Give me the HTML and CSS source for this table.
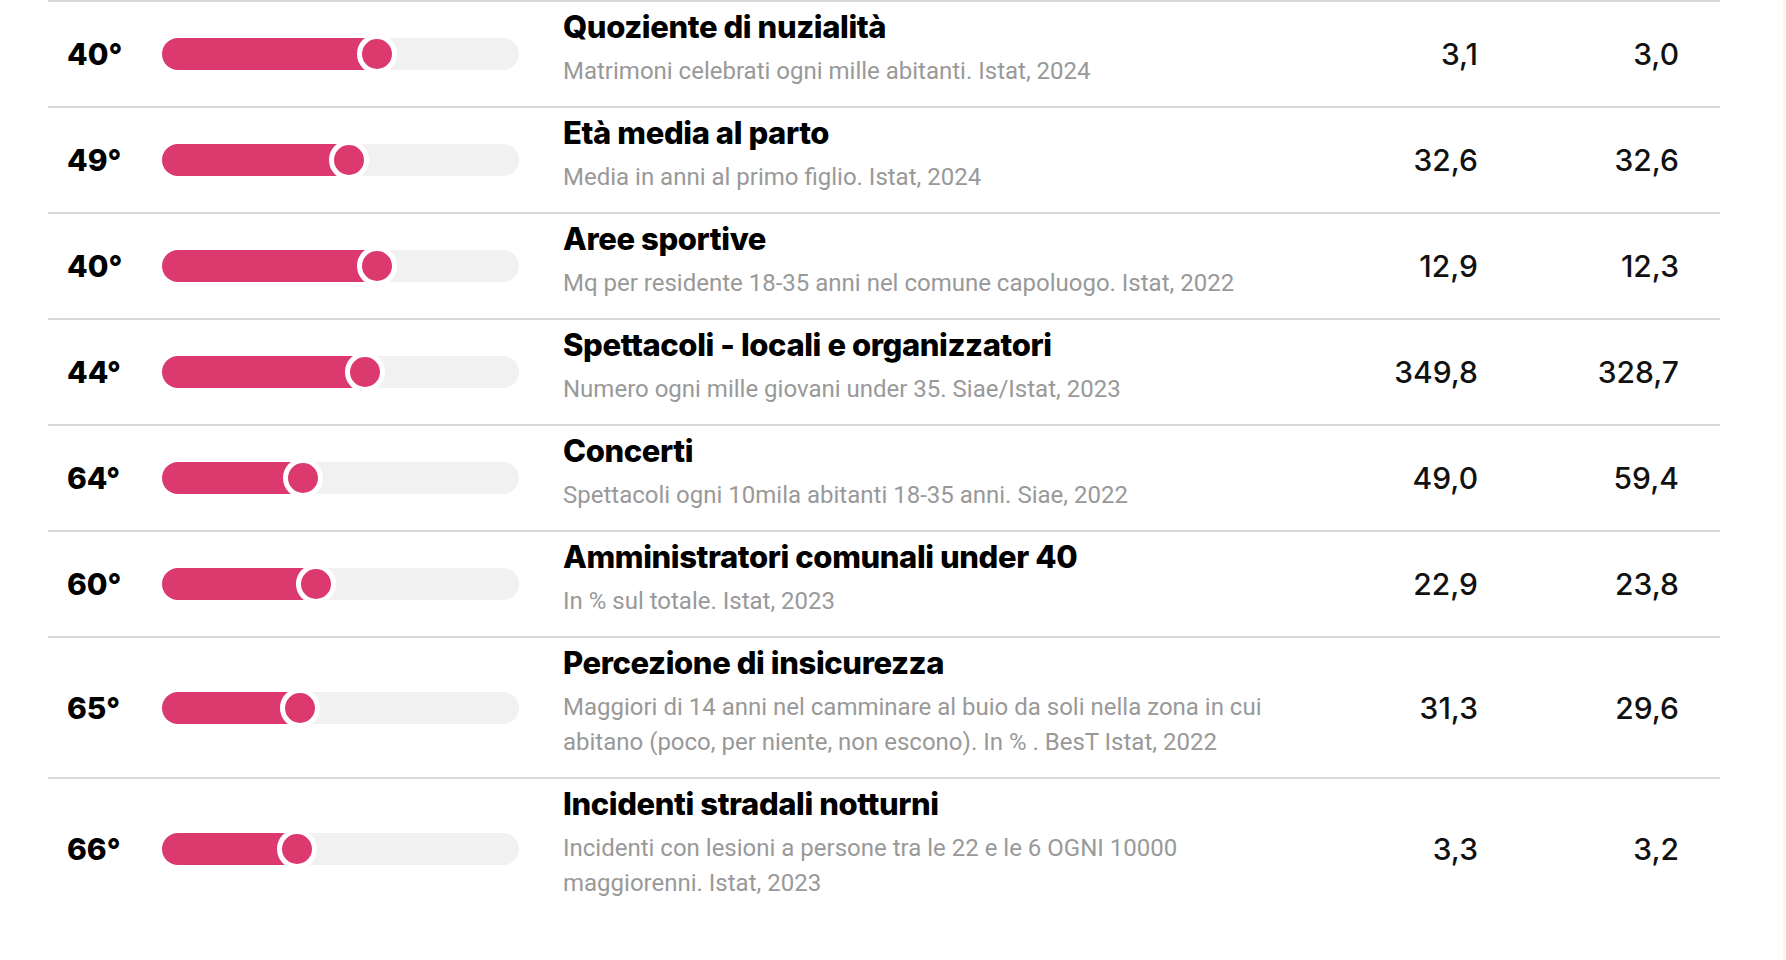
FILE: index.html
```html
<!DOCTYPE html>
<html lang="it">
<head>
<meta charset="utf-8">
<title>Classifica indicatori</title>
<link rel="stylesheet" href="styles.css">
</head>
<body>
<div class="page">
  <main class="content">
    <div class="table">
      <div class="row">
        <div class="rank">40°</div>
        <div class="track"><div class="fill" style="width:60.2%"></div><div class="knob" style="left:60.2%"></div></div>
        <div class="info"><div class="title">Quoziente di nuzialità</div><div class="desc">Matrimoni celebrati ogni mille abitanti. Istat, 2024</div></div>
        <div class="num">3,1</div>
        <div class="num">3,0</div>
      </div>
      <div class="row">
        <div class="rank">49°</div>
        <div class="track"><div class="fill" style="width:52.5%"></div><div class="knob" style="left:52.5%"></div></div>
        <div class="info"><div class="title">Età media al parto</div><div class="desc">Media in anni al primo figlio. Istat, 2024</div></div>
        <div class="num">32,6</div>
        <div class="num">32,6</div>
      </div>
      <div class="row">
        <div class="rank">40°</div>
        <div class="track"><div class="fill" style="width:60.2%"></div><div class="knob" style="left:60.2%"></div></div>
        <div class="info"><div class="title">Aree sportive</div><div class="desc">Mq per residente 18-35 anni nel comune capoluogo. Istat, 2022</div></div>
        <div class="num">12,9</div>
        <div class="num">12,3</div>
      </div>
      <div class="row">
        <div class="rank">44°</div>
        <div class="track"><div class="fill" style="width:56.8%"></div><div class="knob" style="left:56.8%"></div></div>
        <div class="info"><div class="title">Spettacoli - locali e organizzatori</div><div class="desc">Numero ogni mille giovani under 35. Siae/Istat, 2023</div></div>
        <div class="num">349,8</div>
        <div class="num">328,7</div>
      </div>
      <div class="row">
        <div class="rank">64°</div>
        <div class="track"><div class="fill" style="width:39.5%"></div><div class="knob" style="left:39.5%"></div></div>
        <div class="info"><div class="title">Concerti</div><div class="desc">Spettacoli ogni 10mila abitanti 18-35 anni. Siae, 2022</div></div>
        <div class="num">49,0</div>
        <div class="num">59,4</div>
      </div>
      <div class="row">
        <div class="rank">60°</div>
        <div class="track"><div class="fill" style="width:43%"></div><div class="knob" style="left:43%"></div></div>
        <div class="info"><div class="title">Amministratori comunali under 40</div><div class="desc">In % sul totale. Istat, 2023</div></div>
        <div class="num">22,9</div>
        <div class="num">23,8</div>
      </div>
      <div class="row">
        <div class="rank">65°</div>
        <div class="track"><div class="fill" style="width:38.7%"></div><div class="knob" style="left:38.7%"></div></div>
        <div class="info"><div class="title">Percezione di insicurezza</div><div class="desc">Maggiori di 14 anni nel camminare al buio da soli nella zona in cui abitano (poco, per niente, non escono). In % . BesT Istat, 2022</div></div>
        <div class="num">31,3</div>
        <div class="num">29,6</div>
      </div>
      <div class="row">
        <div class="rank">66°</div>
        <div class="track"><div class="fill" style="width:37.8%"></div><div class="knob" style="left:37.8%"></div></div>
        <div class="info"><div class="title">Incidenti stradali notturni</div><div class="desc">Incidenti con lesioni a persone tra le 22 e le 6 OGNI 10000 maggiorenni. Istat, 2023</div></div>
        <div class="num">3,3</div>
        <div class="num">3,2</div>
      </div>
    </div>
  </main>
  <div class="edge"></div>
</div>
</body>
</html>
```
FILE: styles.css
```css
html, body {
  margin: 0;
  padding: 0;
  background: #ffffff;
}

body {
  font-family: "Inter", "Liberation Sans", sans-serif;
  color: #000;
}

.page {
  display: flex;
  min-height: 100vh;
}

.content {
  flex: 1;
}

.edge {
  width: 3px;
  background: #fdf5ec;
}

.table {
  margin-left: 48px;
  width: 1672px;
}

.row {
  display: grid;
  grid-template-columns: 114px 357px 764px 195px 201px;
  align-items: center;
  border-top: 2px solid #d9d9d9;
  padding-right: 41px;
}

.rank {
  padding-left: 19px;
  font-family: "Inter", "Liberation Sans", sans-serif;
  font-weight: 800;
  font-size: 30px;
  line-height: 36px;
  color: #000;
}

.track {
  position: relative;
  height: 32px;
  border-radius: 16px;
  background: #f1f1f1;
  overflow: hidden;
}

.fill {
  height: 100%;
  background: #dc3a6f;
}

.knob {
  position: absolute;
  top: 50%;
  width: 40px;
  height: 40px;
  box-sizing: border-box;
  border-radius: 50%;
  border: 5px solid #ffffff;
  background: #dc3a6f;
  transform: translate(-50%, -50%);
}

.info {
  padding: 7px 0 17px 44px;
}

.title {
  font-family: "Inter", "Liberation Sans", sans-serif;
  font-weight: 800;
  font-size: 31px;
  line-height: 36px;
  letter-spacing: -0.4px;
  color: #000;
}

.desc {
  margin-top: 9px;
  font-family: "Roboto", "Liberation Sans", sans-serif;
  font-weight: 400;
  font-size: 24px;
  line-height: 35px;
  color: #999999;
}

.num {
  text-align: right;
  font-family: "Inter", "Liberation Sans", sans-serif;
  font-weight: 500;
  font-size: 30px;
  line-height: 36px;
  color: #111;
}
```
